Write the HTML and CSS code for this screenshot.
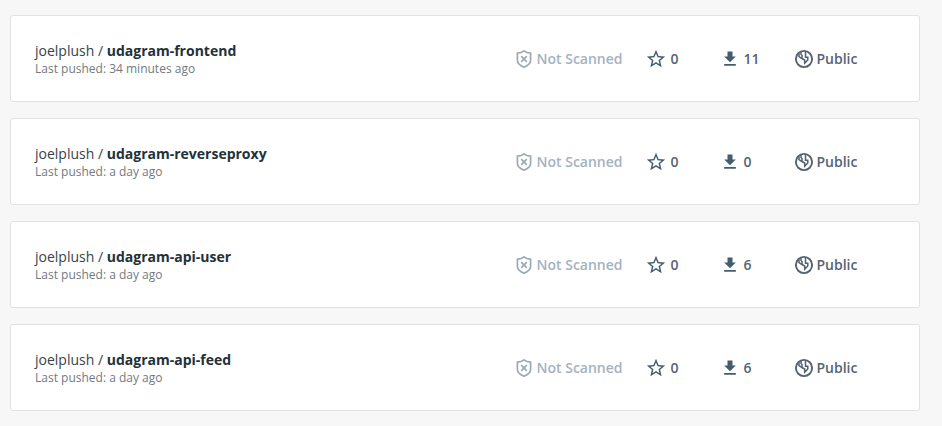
FILE: index.html
```html
<!DOCTYPE html>
<html lang="en"><head><meta charset="utf-8"><title>Repositories</title><link rel="stylesheet" href="styles.css"></head>
<body>
<svg class="defs" aria-hidden="true">
<symbol id="shield" viewBox="0 0 16 20"><path d="M8 1.900C6.500 3.200 4 4 1.400 4.200V11.500C1.400 14.500 4 16.500 8 18.300C12 16.500 14.600 14.500 14.600 11.500V4.200C12 4 9.500 3.200 8 1.900Z M5.200 7.200l5.600 5.600M10.800 7.200l-5.600 5.600" fill="none" stroke="currentColor" stroke-width="1.700"/></symbol>
<symbol id="star" viewBox="0 0 24 24"><path d="M22 9.240l-7.190-.620L12 2 9.190 8.630 2 9.240l5.460 4.730L5.820 21 12 17.270 18.180 21l-1.630-7.030L22 9.240zM12 15.400l-3.760 2.270 1-4.280-3.320-2.880 4.380-.380L12 6.100l1.710 4.040 4.380.380-3.320 2.880 1 4.280L12 15.400z" fill="currentColor"/></symbol>
<symbol id="download" viewBox="0 0 24 24"><path d="M19 9h-4V3H9v6H5l7 7 7-7zM5 18v2h14v-2H5z" fill="currentColor"/></symbol>
<symbol id="globe" viewBox="0 0 20 20"><g fill="none" stroke="currentColor" stroke-width="1.500"><circle cx="10" cy="10" r="8.100" stroke-width="1.900"/><path d="M5 4.500V7.500L8 9.500V6.500L7 5.500V3M11.500 2.500V8.200H13.800V11L10.700 14.200V11L8 9.500"/></g></symbol>
</svg>
<main class="repos" id="repos"></main>
<script src="script.js"></script>
</body></html>
```
FILE: styles.css
```css
*{box-sizing:border-box}
body{margin:0;background:#f7f7f7;font-family:"Open Sans",sans-serif;color:#27343b}
.defs{display:none}
.repos{display:flex;flex-direction:column;gap:16px;padding:15px 22px 15px 10px}
.card{height:87px;display:grid;grid-template-columns:480.500px 130px 74.500px 74px 1fr;align-items:center;padding:0 24px;background:#fff;border:1px solid #e1e2e3;border-radius:3px}
.name{font-size:14px;line-height:20px;color:#36434a}
.name b{font-weight:700;color:#22313a}
.pushed{font-size:12px;line-height:16px;color:#737a7f}
.stat{display:flex;align-items:center;gap:4px;font-size:14px;font-weight:600;line-height:20px;color:#556475;white-space:nowrap}
.stat svg{width:20px;height:20px;flex:none;color:#445d6e}
.stat.shield{gap:5px}
.stat.shield svg{width:16px;color:#9caab5}
.stat.star svg{width:22px;height:22px;margin-left:-1px}
.stat.download{gap:3.500px}
.stat.globe{gap:2.500px}
.stat.globe svg{color:#536171}
.stat.muted{color:#a5b2bf}
```
FILE: script.js
```js
const repos = [
  ["udagram-frontend", "34 minutes ago", 11],
  ["udagram-reverseproxy", "a day ago", 0],
  ["udagram-api-user", "a day ago", 6],
  ["udagram-api-feed", "a day ago", 6]
];
const stat = (icon, text, extra = "") => `<div class="stat ${icon} ${extra}"><svg><use href="#${icon}"/></svg><span>${text}</span></div>`;
document.getElementById("repos").innerHTML = repos.map(([name, pushed, pulls]) => `
<article class="card"><div><div class="name">joelplush / <b>${name}</b></div><div class="pushed">Last pushed: ${pushed}</div></div>
${stat("shield", "Not Scanned", "muted")}${stat("star", 0)}${stat("download", pulls)}${stat("globe", "Public")}</article>`).join("");
```
